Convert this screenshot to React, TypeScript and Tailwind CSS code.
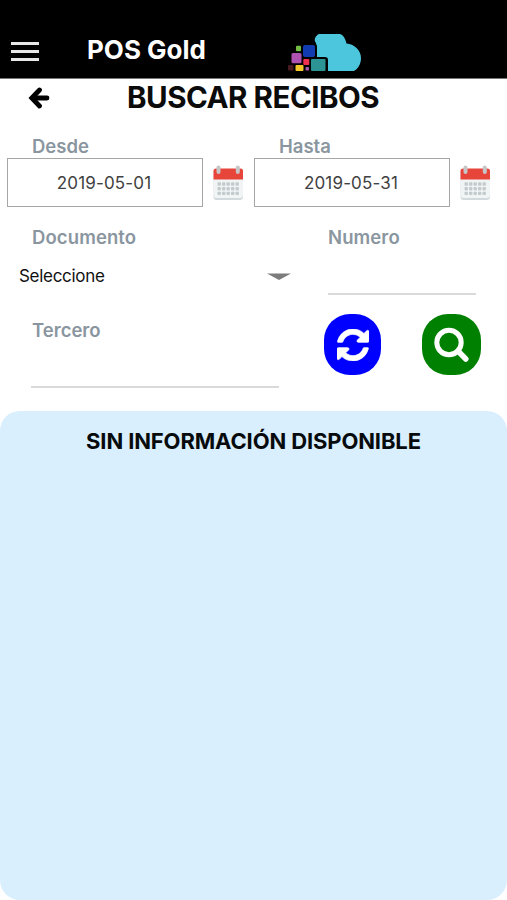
import { useState } from 'react';

interface DateFieldProps {
  label: string;
  value: string;
}

const calendarRows = [17.5, 22.2, 26.9];
const calendarCols = [6.5, 11, 15.5, 20, 24.5];

function CalendarIcon() {
  return (
    <svg width="31" height="36" viewBox="0 0 31 36">
      <rect x="0.5" y="4" width="29.5" height="31" rx="3" fill="#d3dadd" />
      <rect x="0.5" y="4" width="29.5" height="29" rx="3" fill="#f1f4f5" />
      <path d="M3 3.5h24.5a2.5 2.5 0 0 1 2.5 2.5v8.5h-29.5v-8.5a2.5 2.5 0 0 1 2.5-2.5z" fill="#e8453a" />
      {calendarRows.map((y) =>
        calendarCols.map((x) => (
          <rect key={`${x}-${y}`} x={x - 2} y={y - 0.2} width="3.4" height="3.4" rx="0.8" fill="#c3cbcd" />
        ))
      )}
      <rect x="3.5" y="0.5" width="4" height="8.5" rx="2" fill="#c4c6c8" />
      <rect x="22.8" y="0.5" width="4" height="8.5" rx="2" fill="#c4c6c8" />
    </svg>
  );
}

function CloudLogo() {
  return (
    <svg width="74" height="38" viewBox="0 0 74 38">
      <path
        d="M31 0H52C55.5 1 57.5 5 58.5 9.5C66 10 73 16 73 24C73 30 70 35 66 37H38V24H28V9C25 6 28 1 31 0Z"
        fill="#4cc6dc"
      />
      <path d="M13 9.5H26a3 3 0 0 1 3 3V23H37a3 3 0 0 1 3 3V37.5H13z" fill="#000" />
      <rect x="8" y="11.8" width="5" height="5.5" rx="1" fill="#73bd45" />
      <rect x="15" y="11" width="12" height="12" rx="2" fill="#113bb0" />
      <rect x="3.5" y="19" width="10" height="10.3" rx="1.5" fill="#ad52b0" />
      <rect x="15.3" y="25" width="6" height="6" rx="1" fill="#f2304f" />
      <rect x="23" y="25" width="14.5" height="12" rx="1" fill="#2d9496" />
      <rect x="0" y="31" width="5.5" height="5.5" rx="1" fill="#481b20" />
      <rect x="7.5" y="31" width="8" height="6" rx="1" fill="#f2c929" />
      <rect x="17.5" y="33" width="3.5" height="3.5" rx="1" fill="#a65bb0" />
    </svg>
  );
}

function RefreshIcon() {
  return (
    <svg width="32" height="32" viewBox="0 128 1536 1536" fill="currentColor">
      <path d="M1511 1056q0 5-1 7-64 268-268 434.5t-478 166.5q-146 0-282.5-55t-243.5-157l-129 129q-19 19-45 19t-45-19-19-45v-448q0-26 19-45t45-19h448q26 0 45 19t19 45-19 45l-137 137q71 66 161 102t187 36q134 0 250-65t186-179q11-17 53-117 8-23 30-23h192q13 0 22.5 9.5t9.5 22.5zm25-800v448q0 26-19 45t-45 19h-448q-26 0-45-19t-19-45 19-45l138-138q-148-137-349-137-134 0-250 65t-186 179q-11 17-53 117-8 23-30 23h-199q-13 0-22.5-9.5t-9.5-22.5v-7q65-268 270-434.5t480-166.5q146 0 284 55.5t245 156.5l130-129q19-19 45-19t45 19 19 45z" stroke="currentColor" strokeWidth="35" />
    </svg>
  );
}

function DateField({ label, value }: DateFieldProps) {
  return (
    <div className="w-[247px]">
      <div className="pl-[25px] text-[18.5px] leading-6 font-semibold text-[#8a969f]">{label}</div>
      <div className="flex items-center">
        <div className="flex h-[49px] w-[196px] items-center justify-center border border-[#a6a6a6] pt-0.5 pr-0.5 text-[17px] tracking-[0.16px] text-[#414141]">
          {value}
        </div>
        <button className="ml-2.5">
          <CalendarIcon />
        </button>
      </div>
    </div>
  );
}

export default function App() {
  const [numero, setNumero] = useState('');
  const [tercero, setTercero] = useState('');

  return (
    <div className="flex h-[900px] w-[507px] flex-col overflow-hidden bg-white font-['Inter',sans-serif]">
      <header className="flex h-[79px] shrink-0 items-start border-b border-[#777] bg-black pl-[11px]">
        <button className="mt-[42px] flex w-7 flex-col gap-[5px]">
          <span className="h-[3px] w-full bg-[#e8e8e8]" />
          <span className="h-[3px] w-full bg-[#e8e8e8]" />
          <span className="h-[3px] w-full bg-[#e8e8e8]" />
        </button>
        <div className="mt-[34px] ml-12 w-[201px] text-[26px] leading-8 font-bold whitespace-nowrap text-white">
          POS Gold
        </div>
        <div className="mt-[34px]">
          <CloudLogo />
        </div>
      </header>

      <div className="flex h-[55px] shrink-0 items-start">
        <button className="mt-2 ml-7">
          <svg width="22" height="22" viewBox="0 0 22 22" fill="none" stroke="#000" strokeWidth="4.8" strokeLinecap="round">
            <path d="M11.5 3L3.8 11L11.5 19" />
            <path d="M5 11H19" />
          </svg>
        </button>
        <h1 className="ml-[77px] text-[29.5px] leading-9 font-bold tracking-[-0.47px] whitespace-nowrap text-[#0b0b0b]">
          BUSCAR RECIBOS
        </h1>
      </div>

      <div className="flex h-[91px] shrink-0 pl-[7px]">
        <DateField label="Desde" value="2019-05-01" />
        <DateField label="Hasta" value="2019-05-31" />
      </div>

      <div className="flex h-[93px] shrink-0">
        <div className="w-[328px]">
          <div className="pl-8 text-[18.5px] leading-6 font-semibold tracking-[0.1px] text-[#8a969f]">Documento</div>
          <div className="mt-[15px] flex w-[291px] items-center justify-between pl-[19px] text-[17px] leading-6 tracking-[-0.3px] text-[#111]">
            <span>Seleccione</span>
            <svg className="mt-0.5" width="24" height="8" viewBox="0 0 24 8">
              <path d="M0 0.5H24L12 7Z" fill="#7c7c7c" />
            </svg>
          </div>
        </div>
        <div className="w-[148px]">
          <div className="text-[18.5px] leading-6 font-semibold tracking-[0.1px] text-[#8a969f]">Numero</div>
          <input
            value={numero}
            onChange={(e) => setNumero(e.target.value)}
            className="block h-[46px] w-full border-b-2 border-[#d9dadb] outline-none"
          />
        </div>
      </div>

      <div className="flex h-[93px] shrink-0">
        <div className="w-[324px] pl-[31px]">
          <div className="pl-px text-[18.5px] leading-6 font-semibold text-[#8a969f]">Tercero</div>
          <input
            value={tercero}
            onChange={(e) => setTercero(e.target.value)}
            className="block h-[46px] w-[248px] border-b-2 border-[#d9dadb] outline-none"
          />
        </div>
        <button className="-mt-[4px] flex h-[61px] w-[57px] items-center justify-center rounded-[26px] bg-[#0000ff] text-white">
          <RefreshIcon />
        </button>
        <button className="-mt-[4px] ml-[41px] flex h-[61px] w-[59px] items-center justify-center rounded-[26px] bg-[#008000]">
          <svg width="36" height="36" viewBox="0 0 36 36" fill="none" stroke="#fff" strokeWidth="5">
            <circle cx="15" cy="15.5" r="12.2" />
            <path d="M24 24L31.8 32" strokeWidth="5.5" strokeLinecap="round" />
          </svg>
        </button>
      </div>

      <section className="flex-1 rounded-[20px] bg-[#d9effd] pt-[15px] text-center text-[22px] leading-[30px] font-bold tracking-[-0.13px] text-[#080b0d]">
        SIN INFORMACIÓN DISPONIBLE
      </section>
    </div>
  );
}
